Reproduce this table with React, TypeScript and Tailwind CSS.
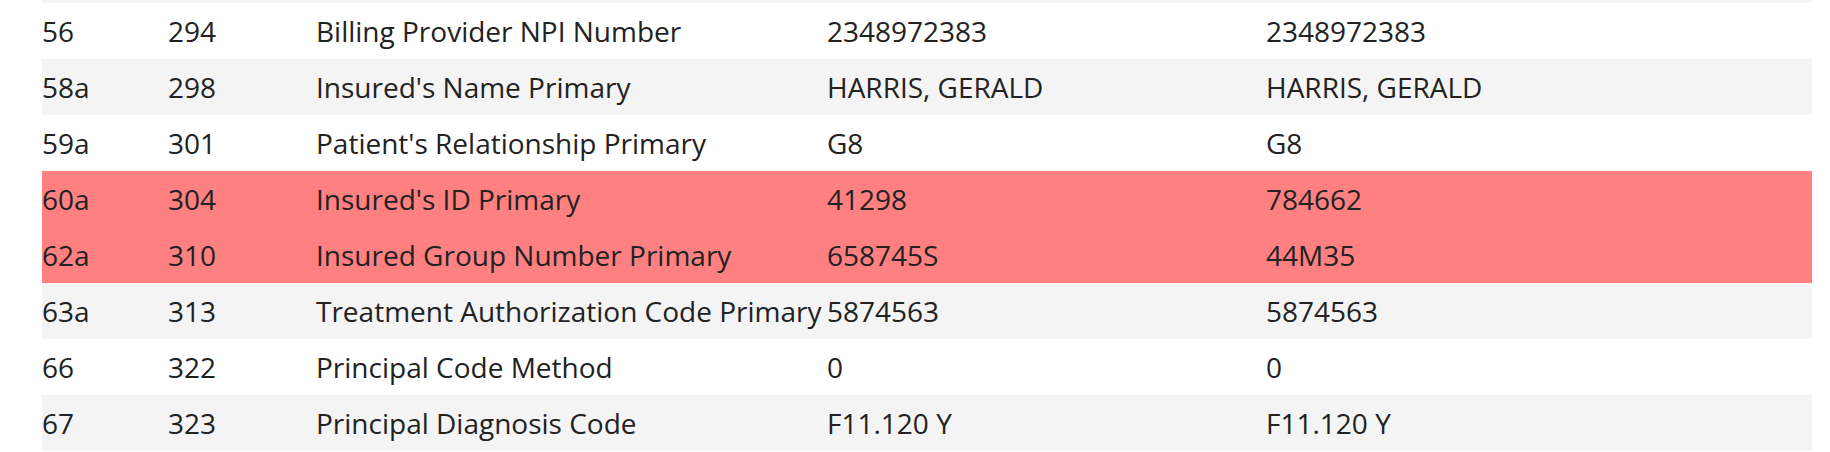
import React from 'react'

type Row = {
  loc: string
  pos: string
  field: string
  expected: string
  actual: string
}

const rows: Row[] = [
  { loc: '56', pos: '294', field: 'Billing Provider NPI Number', expected: '2348972383', actual: '2348972383' },
  { loc: '58a', pos: '298', field: "Insured's Name Primary", expected: 'HARRIS, GERALD', actual: 'HARRIS, GERALD' },
  { loc: '59a', pos: '301', field: "Patient's Relationship Primary", expected: 'G8', actual: 'G8' },
  { loc: '60a', pos: '304', field: "Insured's ID Primary", expected: '41298', actual: '784662' },
  { loc: '62a', pos: '310', field: 'Insured Group Number Primary', expected: '658745S', actual: '44M35' },
  { loc: '63a', pos: '313', field: 'Treatment Authorization Code Primary', expected: '5874563', actual: '5874563' },
  { loc: '66', pos: '322', field: 'Principal Code Method', expected: '0', actual: '0' },
  { loc: '67', pos: '323', field: 'Principal Diagnosis Code', expected: 'F11.120 Y', actual: 'F11.120 Y' },
]

export default function App() {
  return (
    <div className="w-[1830px] h-[452px] bg-white pl-[42px] pr-[18px] overflow-hidden" style={{ fontFamily: '"Open Sans", sans-serif' }}>
      <div className="h-[3px] bg-[#f4f4f4]" />
      {rows.map((r, i) => {
        const mismatch = r.expected !== r.actual
        const bg = mismatch ? 'bg-[#ff8080]' : i % 2 === 1 ? 'bg-[#f4f4f4]' : 'bg-white'
        return (
          <div
            key={r.loc}
            className={`grid grid-cols-[126px_148px_511px_439px_1fr] items-center h-[56px] text-[28px] text-[#222] whitespace-nowrap ${bg}`}
          >
            <span>{r.loc}</span>
            <span>{r.pos}</span>
            <span>{r.field}</span>
            <span>{r.expected}</span>
            <span>{r.actual}</span>
          </div>
        )
      })}
    </div>
  )
}
